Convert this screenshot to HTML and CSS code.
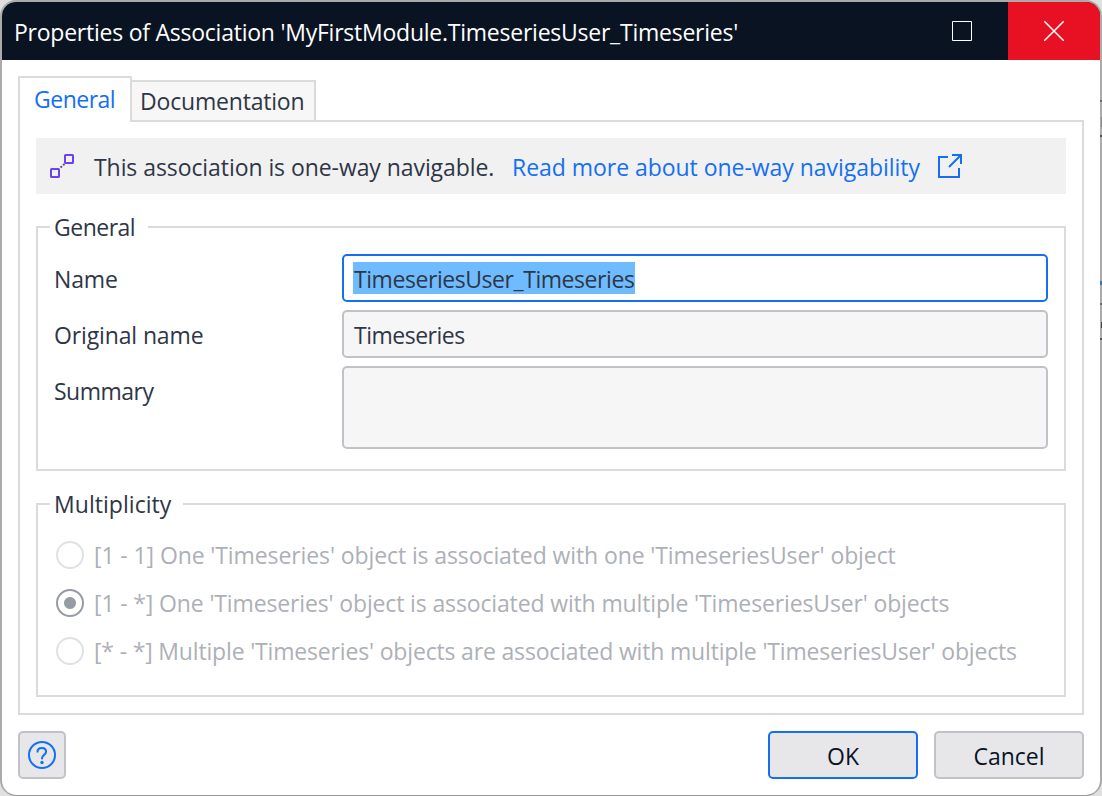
FILE: index.html
```html
<!DOCTYPE html>
<html lang="en">
<head>
<meta charset="utf-8">
<title>Properties of Association</title>
<link rel="stylesheet" href="styles.css">
</head>
<body>
<div class="window">
  <header class="titlebar">
    <h1 class="title">Properties of Association 'MyFirstModule.TimeseriesUser_Timeseries'</h1>
    <button class="maximize" aria-label="Maximize"><svg width="20" height="20" viewBox="0 0 20 20"><path d="M.5.5h19v19H.5z"/></svg></button>
    <button class="close" aria-label="Close"><svg width="20" height="20" viewBox="0 0 20 20"><path d="M.3.300l19.400 19.400M19.700.3L.3 19.700"/></svg></button>
  </header>
  <main class="content">
    <nav class="tabs">
      <a class="tab active">General</a>
      <a class="tab">Documentation</a>
    </nav>
    <section class="panel">
      <div class="banner">
        <svg class="assoc" width="24" height="25" viewBox="0 0 24 25"><rect class="box" x="1" y="15" width="8" height="8" rx=".5"/><rect class="box" x="15" y="1" width="8" height="8" rx=".5"/><path class="dash" d="M10.500 13.500l4-3.500"/></svg>
        <span class="notice">This association is one-way navigable.</span>
        <a class="link">Read more about one-way navigability</a>
        <svg class="external" width="24" height="24" viewBox="0 0 24 24"><path d="M10 3H1v20h20v-9M11 13L23 1M14 1h9v9"/></svg>
      </div>
      <section class="group general">
        <h2 class="legend">General</h2>
        <div class="form">
          <label class="label">Name</label>
          <div class="field focused"><mark class="selection">TimeseriesUser_Timeseries</mark></div>
          <label class="label">Original name</label>
          <div class="field tight">Timeseries</div>
          <label class="label summary">Summary</label>
          <div class="field area"></div>
        </div>
      </section>
      <section class="group multiplicity">
        <h2 class="legend wide">Multiplicity</h2>
        <div class="radios">
          <label class="option one-one"><i class="radio"></i>[1 - 1] One 'Timeseries' object is associated with one 'TimeseriesUser' object</label>
          <label class="option one-many"><i class="radio checked"></i>[1 - *] One 'Timeseries' object is associated with multiple 'TimeseriesUser' objects</label>
          <label class="option many-many"><i class="radio"></i>[* - *] Multiple 'Timeseries' objects are associated with multiple 'TimeseriesUser' objects</label>
        </div>
      </section>
    </section>
    <footer class="footer">
      <button class="button help" aria-label="Help"><svg width="28" height="28" viewBox="0 0 28 28"><circle cx="14" cy="14" r="13"/><path d="M9.500 11.500V11q0-4 4.300-4t4.300 3.800q0 1.700-2 3T14 17.500v.700"/><circle class="dot" cx="14" cy="21.500" r="1.700"/></svg></button>
      <button class="button primary">OK</button>
      <button class="button">Cancel</button>
    </footer>
  </main>
</div>
<div class="backdrop-edge"></div>
</body>
</html>
```
FILE: styles.css
```css
* { box-sizing: border-box; }

body {
  margin: 0;
  height: 796px;
  overflow: hidden;
  background: #e0e0e0;
  font: 23px/32px "Open Sans", sans-serif;
  color: #2f3646;
  white-space: nowrap;
}

svg { display: block; fill: none; flex: none; }
button { margin: 0; padding: 0; border: 0; font: inherit; }

.window {
  height: 796px;
  border: 2px solid #ababab;
  border-bottom: 1px solid #979797;
  border-radius: 16px;
  overflow: hidden;
  background: #fff;
}

.titlebar {
  display: flex;
  height: 58px;
  background: #091322;
  color: #fff;
}
.title {
  flex: 1;
  margin: 0;
  padding: 14px 0 0 12px;
  font-size: 23px;
  font-weight: 400;
  letter-spacing: -0.24px;
}
.maximize, .close {
  display: flex;
  align-items: center;
  justify-content: center;
  width: 92px;
  background: none;
  stroke: #fff;
}
.close { background: #e81123; stroke-width: 1.5; }

.content { padding: 16px; }

.tabs {
  position: relative;
  display: flex;
  align-items: flex-end;
  height: 46px;
  margin-bottom: -2px;
}
.tab {
  height: 42px;
  margin-left: -2px;
  padding: 3px 8px;
  width: 186px;
  border: 2px solid #dbdbdb;
  background: #f7f7f7;
  letter-spacing: -0.19px;
}
.tab.active {
  height: 46px;
  width: 114px;
  margin-left: 0;
  padding: 5px 14px;
  border-bottom: 0;
  background: #fff;
  color: #146ff4;
  letter-spacing: -0.5px;
}

.panel {
  height: 595px;
  padding: 16px;
  border: 2px solid #dbdbdb;
}

.banner {
  display: flex;
  height: 56px;
  padding: 13px 14px;
  background: #f1f1f1;
}
.assoc { margin-top: 3px; }
.box { stroke: #6f3ff5; stroke-width: 2; }
.dash { stroke: #555b66; stroke-width: 2; stroke-dasharray: 2 1.5; }
.notice { width: 418px; margin-left: 20px; letter-spacing: -0.07px; }
.link { width: 408px; color: #146ff4; letter-spacing: -0.04px; }
.external { margin: 3px 0 0 18px; stroke: #146ff4; stroke-width: 2; }

.group {
  border: 2px solid #dbdbdb;
  padding-left: 16px;
}
.general { height: 245px; margin-top: 32px; }
.multiplicity { height: 194px; margin-top: 32px; }
.legend {
  width: max-content;
  margin: -17px 0 0 -4px;
  padding: 0 13px 0 4px;
  background: #fff;
  font-size: 23px;
  font-weight: 400;
  letter-spacing: -0.5px;
}
.legend.wide { padding-right: 12px; letter-spacing: 0.05px; }

.form {
  display: grid;
  grid-template-columns: 288px 706px;
  row-gap: 8px;
  margin-top: 11px;
}
.label { padding-top: 9px; letter-spacing: -0.13px; }
.label.summary { letter-spacing: -0.5px; }
.field {
  height: 48px;
  padding: 7px 10px;
  border: 2px solid #c2c1c7;
  border-radius: 5px;
  background: #f6f6f6;
}
.field.focused { padding: 6px 9px; border-color: #146ff4; background: #fff; }
.field.tight { letter-spacing: -0.5px; }
.field.area { height: 83px; }
.selection {
  display: inline-block;
  width: 282px;
  height: 32px;
  padding: 1px 0 0 1px;
  background: #6ebcff;
  color: inherit;
  letter-spacing: -0.44px;
}

.radios {
  display: grid;
  grid-auto-rows: 48px;
  margin-top: 11px;
  color: #adb0b7;
}
.option { display: flex; padding-top: 8px; }
.one-one { letter-spacing: -0.1px; }
.one-many { letter-spacing: -0.14px; }
.many-many { letter-spacing: -0.17px; }
.radio {
  width: 28px;
  height: 28px;
  margin: 2px 10px 0 2px;
  border: 2px solid #e0e1e3;
  border-radius: 50%;
}
.radio.checked {
  border-color: #979ba4;
  background: radial-gradient(circle, #979ba4 5.500px, transparent 6.500px);
}

.footer { display: flex; gap: 16px; margin-top: 16px; }
.button {
  width: 150px;
  height: 48px;
  padding-top: 1px;
  border: 2px solid #c2c1c7;
  border-radius: 5px;
  background: #e7e7ea;
  color: #0a1326;
}
.primary { border-color: #146ff4; }
.help {
  display: flex;
  align-items: center;
  justify-content: center;
  width: 48px;
  margin-right: auto;
  padding: 0;
  stroke: #146ff4;
  stroke-width: 2;
}
.dot { fill: #146ff4; stroke: none; }

/* Sliver of the window behind the dialog, over its right border */
.backdrop-edge {
  position: absolute;
  top: 100px;
  right: 0;
  width: 2px;
  height: 242px;
  background:
    linear-gradient(#666, #666) 0 0 / 2px 2px,
    linear-gradient(#888, #888) 1px 17px / 1px 10px,
    linear-gradient(#555, #555) 0 35px / 2px 2px,
    linear-gradient(#3f73bd, #3f73bd) 0 181px / 2px 4px,
    linear-gradient(#666, #666) 0 203px / 2px 2px,
    linear-gradient(#444, #444) 1px 222px / 1px 6px,
    linear-gradient(#555, #555) 0 238px / 2px 2px;
  background-repeat: no-repeat;
}
```
